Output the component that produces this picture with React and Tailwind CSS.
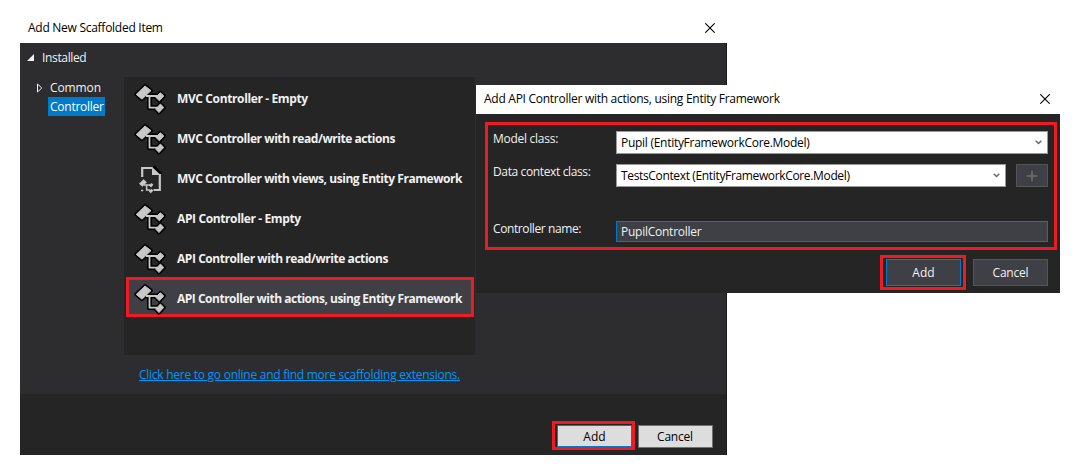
function NodesIcon() {
  const shapes = (
    <>
      <path d="M11 3 17 7.6 8 16.2 2.2 11.4Z" />
      <path d="M26.4 9.8 29.8 13 25.4 17.8 21.6 14.2Z" />
      <path d="M26.4 21 29.8 24.4 25 29.6 21.6 26Z" />
    </>
  );
  return (
    <svg className="h-8 w-8 shrink-0" viewBox="0 0 32 32">
      <g stroke="#000" strokeWidth="3.8" strokeLinejoin="round" fill="#000">
        {shapes}
        <path d="M12 13H24M15.5 13V24.7H23" fill="none" strokeWidth="5" />
      </g>
      <g fill="#c8c8c8" stroke="#c8c8c8" strokeWidth="0.9" strokeLinejoin="round">
        {shapes}
        <path d="M12 13H24M15.5 13V24.7H23" fill="none" strokeWidth="1.8" />
      </g>
    </svg>
  );
}

function PageIcon() {
  return (
    <svg className="h-8 w-8 shrink-0" viewBox="0 0 32 32">
      <path d="M19.5 3.2 27.5 11.2" stroke="#000" strokeWidth="2.6" />
      <path d="M8.2 14V5H18.5M19.5 27H25.8V11" fill="none" stroke="#c8c8c8" strokeWidth="2.2" />
      <path d="M18 4 26.6 12H18Z" fill="#c8c8c8" />
      <path d="M9.6 16.2 12.9 19.2 8.4 23.8 5 20.8ZM17.4 20 19.4 21.8 17 24.4 15 22.6ZM17.4 25.8 19.4 27.6 16.8 30.2 14.8 28.4Z" fill="#c8c8c8" />
      <path d="M10 21.9H16M12.6 21.9V26.9H16M7 27.4H9.2" fill="none" stroke="#c8c8c8" strokeWidth="1.5" />
    </svg>
  );
}

function CloseIcon() {
  return (
    <svg className="h-[10px] w-[10px]" viewBox="0 0 10 10">
      <path d="M.3.3 9.7 9.7M9.7.3.3 9.7" stroke="#000" strokeWidth="1.1" />
    </svg>
  );
}

function Select({ children, className }) {
  return (
    <div className={"flex h-[23px] items-center justify-between border border-[#999999] bg-white pr-[5px] pl-1 text-black " + className}>
      {children}
      <svg className="h-[5px] w-[7px]" viewBox="0 0 7 5">
        <path d="M.7.8 3.5 3.5 6.3.8" fill="none" stroke="#666" strokeWidth="1.5" />
      </svg>
    </div>
  );
}

const items = [
  { label: "MVC Controller - Empty", track: "tracking-[-0.38px]" },
  { label: "MVC Controller with read/write actions", track: "tracking-[-0.44px]" },
  { label: "MVC Controller with views, using Entity Framework", track: "tracking-[-0.45px]", page: true },
  { label: "API Controller - Empty", track: "tracking-[-0.38px]" },
  { label: "API Controller with read/write actions", track: "tracking-[-0.44px]" },
  { label: "API Controller with actions, using Entity Framework", track: "tracking-[-0.49px]", selected: true },
];

function ScaffoldWindow() {
  return (
    <div className="flex h-[441px] w-[707px] flex-col">
      <div className="flex h-[29px] items-center justify-between pr-[12px] pb-px pl-2 text-black">
        <span className="tracking-[-0.27px]">Add New Scaffolded Item</span>
        <CloseIcon />
      </div>
      <div className="flex h-[351px] border-r border-[#1b1b1c] bg-[#2d2d30]">
        <div className="w-[104px] shrink-0 pt-[6px]">
          <div className="flex h-[18px] items-center pl-[7px]">
            <svg className="mr-2 mb-[2px] h-[7px] w-[7px]" viewBox="0 0 7 7"><path d="M7 0V7H0Z" fill="#f1f1f1" /></svg>
            <span className="tracking-[-0.35px]">Installed</span>
          </div>
          <div className="mt-[11px] flex h-[19px] items-center pl-[17px]">
            <svg className="mr-[7px] h-[10px] w-[6px]" viewBox="0 0 6 10"><path d="M.5 1 4.7 5 .5 9Z" fill="none" stroke="#f1f1f1" /></svg>
            <span className="tracking-[-0.1px]">Common</span>
          </div>
          <div className="ml-[28px] flex h-[19px] w-[57px] items-center bg-[#007acc] pl-[2px] text-white">
            <span className="tracking-[-0.25px]">Controller</span>
          </div>
        </div>
        <div className="pt-[34px]">
          <div className="h-[278px] w-[351px] bg-[#252526] pl-[2px]">
            {items.map((it) => (
              <div
                key={it.label}
                className={
                  it.selected
                    ? "flex h-10 w-[348px] items-center border-[3px] border-[#ed1c24] bg-[#3f3f46] pt-1 pl-[5px]"
                    : "flex h-10 w-[348px] items-center pt-1 pl-2"
                }
              >
                {it.page ? <PageIcon /> : <NodesIcon />}
                <span className={"ml-[11px] font-bold whitespace-nowrap " + it.track}>{it.label}</span>
              </div>
            ))}
          </div>
          <div className="mt-3 pl-[15px]">
            <a className="tracking-[-0.26px] text-[#0097fb] underline">Click here to go online and find more scaffolding extensions.</a>
          </div>
        </div>
      </div>
      <div className="flex flex-1 border-r border-[#1b1b1c] bg-[#252526] pt-[27px] pl-[532px] text-black">
        <div className="h-[29px] w-[83px] border-[3px] border-[#ed1c24] pt-[1px] pl-[2px]">
          <button className="flex h-[22px] w-[75px] items-center justify-center border border-[#007acc] bg-[#dddddd] pt-px">Add</button>
        </div>
        <button className="mt-1 ml-[3px] flex h-[23px] w-[75px] items-center justify-center border border-[#707070] bg-[#dddddd] pr-px tracking-[-0.2px]">Cancel</button>
      </div>
    </div>
  );
}

function ApiDialog() {
  return (
    <div className="absolute top-[85px] left-[476px] flex h-[208px] w-[584px] flex-col bg-[#252526]">
      <div className="flex h-[29px] shrink-0 items-center justify-between bg-white pr-[10px] pb-px pl-2 text-black">
        <span className="tracking-[-0.27px]">Add API Controller with actions, using Entity Framework</span>
        <CloseIcon />
      </div>
      <div className="mt-2 ml-[9px] h-[128px] w-[572px] shrink-0 border-[3px] border-[#ed1c24] pt-[6px] pl-[5px]">
        <div className="flex h-[33px]">
          <span className="w-[123px] shrink-0 tracking-[-0.27px]">Model class:</span>
          <Select className="w-[432px] tracking-[-0.28px]">Pupil (EntityFrameworkCore.Model)</Select>
        </div>
        <div className="flex h-[57px]">
          <span className="w-[123px] shrink-0 tracking-[-0.37px]">Data context class:</span>
          <Select className="w-[390px] tracking-[-0.35px]">TestsContext (EntityFrameworkCore.Model)</Select>
          <button className="ml-[10px] flex h-[23px] w-8 items-center justify-center border border-[#555555] bg-[#3f3f46]">
            <svg className="h-[10px] w-[10px]" viewBox="0 0 10 10"><path d="M5 0V10M0 5H10" stroke="#656565" strokeWidth="2" /></svg>
          </button>
        </div>
        <div className="flex">
          <span className="w-[123px] shrink-0 tracking-[-0.4px]">Controller name:</span>
          <div className="flex h-[21px] w-[432px] items-center border border-[#007acc] bg-[#3f3f46] pt-px pl-1 tracking-[-0.25px]">PupilController</div>
        </div>
      </div>
      <div className="mt-[5px] flex pl-[404px]">
        <div className="h-[35px] w-[86px] border-[3px] border-[#ed1c24] pt-[1px] pl-[3px]">
          <button className="flex h-[27px] w-[75px] items-center justify-center border border-[#007acc] bg-[#3f3f46]">Add</button>
        </div>
        <button className="mt-1 ml-[7px] flex h-[27px] w-[75px] items-center justify-center border border-[#555555] bg-[#3f3f46] tracking-[-0.2px]">Cancel</button>
      </div>
    </div>
  );
}

export default function App() {
  return (
    <div className="relative h-[474px] w-[1081px] overflow-hidden bg-white pt-[14px] pl-5 font-['Open_Sans','Noto_Sans',sans-serif] text-[12px] leading-4 text-[#f1f1f1]">
      <ScaffoldWindow />
      <ApiDialog />
    </div>
  );
}
